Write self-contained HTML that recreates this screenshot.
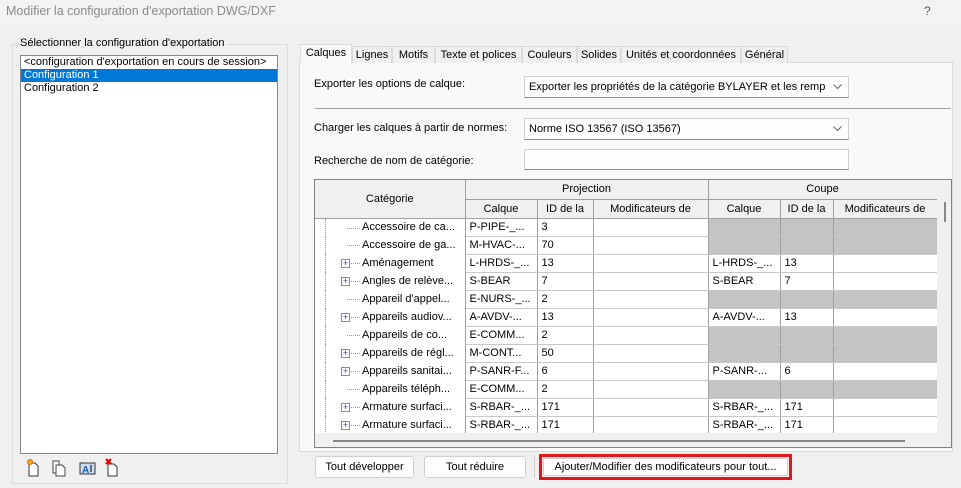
<!DOCTYPE html>
<html><head><meta charset="utf-8"><style>
*{box-sizing:border-box;margin:0;padding:0}
html,body{width:961px;height:488px;overflow:hidden}
body{background:#f0f0f0;font-family:"Liberation Sans",sans-serif;font-size:11px;color:#000;position:relative}
.a{position:absolute;white-space:nowrap}
.title{left:6px;top:4px;color:#8a8a8a;font-size:12.5px}
.grp{left:12px;top:44px;width:276px;height:440px;border:1px solid #dcdcdc}
.lbl{background:#f0f0f0;padding:0 2px}
.list{left:20px;top:55px;width:258px;height:399px;background:#fff;border:1px solid #828790}
.list div{height:13px;line-height:13px;padding-left:3px}
.sel{background:#0078d7;color:#fff}
.tab{top:46px;height:17px;border:1px solid #dadada;border-bottom:none;background:#f0f0f0;padding:2px 0 0 0;text-align:center;line-height:13px}
.panel{left:299px;top:62px;width:654px;height:390px;background:#f9f9f9;border:1px solid #dadada}
.dd{left:524px;width:325px;height:22px;background:#fdfdfd;border:1px solid #d0d0d0;border-bottom-color:#8a8a8a;padding:3px 4px;line-height:14px}
.dd .t{display:block;width:296px;overflow:hidden}
.dd svg{position:absolute;right:6px;top:7px}
.grid{left:314px;top:179px;width:638px;height:269px;border:1px solid #828282;background:#f0f0f0;overflow:hidden}
table{border-collapse:collapse;table-layout:fixed;position:absolute;left:0;top:0;background:#fff}
td{border-right:1px solid #a0a0a0;border-bottom:1px solid #c8c8c8;height:18px;padding:0 0 0 4px;overflow:hidden;white-space:nowrap;line-height:17px}
th{font-weight:normal;background:#f0f0f0;border-right:1px solid #a0a0a0;border-bottom:1px solid #a0a0a0;height:19px;overflow:hidden;white-space:nowrap}
.h{background:#c4c4c4}
td.c{position:relative;padding-left:47px;border-bottom:none}
td.c:before{content:"";position:absolute;left:10px;top:0;height:18px;border-left:1px dotted #999}
td.c:after{content:"";position:absolute;left:32px;top:9px;width:13px;border-top:1px dotted #999}
.pl{position:absolute;left:26px;top:5px;width:9px;height:9px;border:1px solid #8a8aa8;background:#fff;font-size:9px;line-height:7px;text-align:center;color:#2a4a9a;z-index:2}
.btn{top:456px;height:22px;background:#fdfdfd;border:1px solid #d0d0d0;border-radius:3px;text-align:center;line-height:20px}
</style></head><body>
<div class="a" style="left:0;top:0;width:961px;height:24px;background:#f3f3f3"></div>
<div class="a title">Modifier la configuration d'exportation DWG/DXF</div>
<div class="a" style="left:924px;top:4px;color:#555;font-size:12px">?</div>

<div class="a grp"></div>
<div class="a lbl" style="left:18px;top:37px">Sélectionner la configuration d'exportation</div>
<div class="a list">
<div>&lt;configuration d'exportation en cours de session&gt;</div>
<div class="sel">Configuration 1</div>
<div>Configuration 2</div>
</div>
<svg class="a" style="left:26px;top:458px" width="100" height="20">
<path d="M3 5h6l3 3v10H3z" fill="#fff" stroke="#333"/><circle cx="4" cy="4" r="2.5" fill="#f5a623" stroke="#e07000"/>
<path d="M27 3h6v12h-6z" fill="#fff" stroke="#444"/><path d="M30 7h6l3 3v8h-9z" fill="#fff" stroke="#444"/>
<rect x="54" y="5" width="15" height="11" fill="#cde" stroke="#333"/><text x="56" y="15" font-size="10" font-family="Liberation Sans" fill="#1a5fb4" font-weight="bold">A</text><path d="M65 7v7" stroke="#000"/>
<path d="M82 6h6l3 3v9h-9z" fill="#fff" stroke="#333"/><path d="M80 1l5 5M85 1l-5 5" stroke="#d00" stroke-width="2"/>
</svg>

<div class="a panel"></div>
<div class="a tab" style="left:300px;top:44px;height:19px;background:#f9f9f9;width:52px">Calques</div>
<div class="a tab" style="left:352px;width:40px">Lignes</div>
<div class="a tab" style="left:392px;width:43px">Motifs</div>
<div class="a tab" style="left:435px;width:87px">Texte et polices</div>
<div class="a tab" style="left:522px;width:55px">Couleurs</div>
<div class="a tab" style="left:577px;width:44px">Solides</div>
<div class="a tab" style="left:621px;width:120px">Unités et coordonnées</div>
<div class="a tab" style="left:741px;width:47px">Général</div>

<div class="a" style="left:314px;top:78px">Exporter les options de calque:</div>
<div class="a dd" style="top:76px"><span class="t">Exporter les propriétés de la catégorie BYLAYER et les remplace</span><svg width="9" height="6"><path d="M0.5 0.5l4 4 4-4" fill="none" stroke="#666"/></svg></div>
<div class="a" style="left:315px;top:108px;width:636px;border-top:1px solid #a0a0a0"></div>
<div class="a" style="left:314px;top:122px">Charger les calques à partir de normes:</div>
<div class="a dd" style="top:118px"><span class="t">Norme ISO 13567 (ISO 13567)</span><svg width="9" height="6"><path d="M0.5 0.5l4 4 4-4" fill="none" stroke="#666"/></svg></div>
<div class="a" style="left:314px;top:155px">Recherche de nom de catégorie:</div>
<div class="a dd" style="top:149px;height:21px"></div>

<div class="a grid">
<table>
<colgroup><col style="width:150px"><col style="width:72px"><col style="width:56px"><col style="width:115px"><col style="width:72px"><col style="width:53px"><col style="width:104px"></colgroup>
<tr><th rowspan="2" style="height:38px">Catégorie</th><th colspan="3">Projection</th><th colspan="3">Coupe</th></tr>
<tr><th>Calque</th><th>ID de la</th><th>Modificateurs de</th><th>Calque</th><th>ID de la</th><th>Modificateurs de</th></tr>
<tr><td class="c">Accessoire de ca...</td><td>P-PIPE-_...</td><td>3</td><td></td><td class="h"></td><td class="h"></td><td class="h"></td></tr>
<tr><td class="c">Accessoire de ga...</td><td>M-HVAC-...</td><td>70</td><td></td><td class="h"></td><td class="h"></td><td class="h"></td></tr>
<tr><td class="c"><span class="pl">+</span>Aménagement</td><td>L-HRDS-_...</td><td>13</td><td></td><td>L-HRDS-_...</td><td>13</td><td></td></tr>
<tr><td class="c"><span class="pl">+</span>Angles de relève...</td><td>S-BEAR</td><td>7</td><td></td><td>S-BEAR</td><td>7</td><td></td></tr>
<tr><td class="c">Appareil d'appel...</td><td>E-NURS-_...</td><td>2</td><td></td><td class="h"></td><td class="h"></td><td class="h"></td></tr>
<tr><td class="c"><span class="pl">+</span>Appareils audiov...</td><td>A-AVDV-...</td><td>13</td><td></td><td>A-AVDV-...</td><td>13</td><td></td></tr>
<tr><td class="c">Appareils de co...</td><td>E-COMM...</td><td>2</td><td></td><td class="h"></td><td class="h"></td><td class="h"></td></tr>
<tr><td class="c"><span class="pl">+</span>Appareils de régl...</td><td>M-CONT...</td><td>50</td><td></td><td class="h"></td><td class="h"></td><td class="h"></td></tr>
<tr><td class="c"><span class="pl">+</span>Appareils sanitai...</td><td>P-SANR-F...</td><td>6</td><td></td><td>P-SANR-...</td><td>6</td><td></td></tr>
<tr><td class="c">Appareils téléph...</td><td>E-COMM...</td><td>2</td><td></td><td class="h"></td><td class="h"></td><td class="h"></td></tr>
<tr><td class="c"><span class="pl">+</span>Armature surfaci...</td><td>S-RBAR-_...</td><td>171</td><td></td><td>S-RBAR-_...</td><td>171</td><td></td></tr>
<tr><td class="c"><span class="pl">+</span>Armature surfaci...</td><td>S-RBAR-_...</td><td>171</td><td></td><td>S-RBAR-_...</td><td>171</td><td></td></tr>
</table>
<div class="a" style="left:622px;top:0;width:16px;height:269px;background:#f0f0f0"></div>
<div class="a" style="left:629px;top:22px;width:2px;height:20px;background:#888"></div>
<div class="a" style="left:0;top:253px;width:622px;height:16px;background:#f0f0f0"></div>
<div class="a" style="left:18px;top:260px;width:572px;height:2px;background:#888"></div>
</div>

<div class="a btn" style="left:315px;width:99px">Tout développer</div>
<div class="a btn" style="left:424px;width:102px">Tout réduire</div>
<div class="a" style="left:534px;top:456px;height:22px;border-left:1px solid #ccc"></div>
<div class="a" style="left:539px;top:454px;width:253px;height:26px;border:3px solid #e3151a"></div>
<div class="a btn" style="left:543px;top:458px;width:245px;height:18px;line-height:16px;border-radius:2px">Ajouter/Modifier des modificateurs pour tout...</div>
</body></html>
